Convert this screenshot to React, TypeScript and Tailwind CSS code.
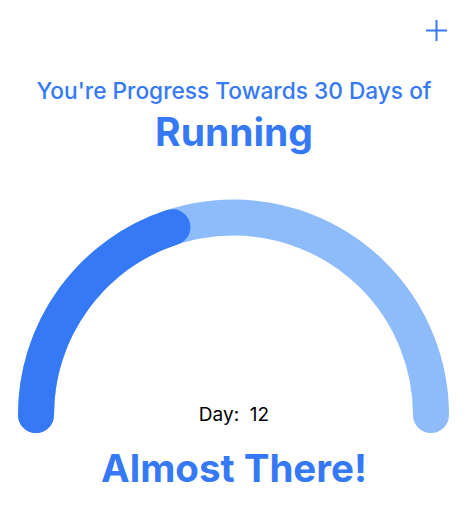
import React from "react";

const DAYS = 30;
const day = 12;

// gauge geometry, in svg coords
const CX = 233.5;
const CY = 219;
const R = 197.5;

function arcPath(fraction: number) {
  const a = Math.PI - Math.PI * fraction;
  const x = CX + R * Math.cos(a);
  const y = CY - R * Math.sin(a);
  return `M ${CX - R} ${CY} A ${R} ${R} 0 0 1 ${x} ${y}`;
}

function Gauge() {
  return (
    <div className="relative h-[240px] w-full">
      <svg width="468" height="240" viewBox="0 0 468 240" className="block">
        <path
          d={arcPath(1)}
          fill="none"
          stroke="#8ebbf9"
          strokeWidth={36}
          strokeLinecap="round"
        />
        <path
          d={arcPath(day / DAYS)}
          fill="none"
          stroke="#3579f6"
          strokeWidth={36}
          strokeLinecap="round"
        />
      </svg>
      <div className="absolute left-0 right-0 top-[207px] text-center text-[19px] leading-[24px] text-black">
        Day:&nbsp; {day}
      </div>
    </div>
  );
}

export default function App() {
  return (
    <div
      className="flex h-[520px] w-[468px] flex-col bg-white"
      style={{ fontFamily: "Inter, 'Noto Sans', sans-serif" }}
    >
      <div className="flex justify-end pr-[21px] pt-[20px]">
        <button className="text-[#3579f6]" aria-label="Add">
          <svg width="21" height="21" viewBox="0 0 21 21" className="block">
            <path d="M10.5 0 V21 M0 10.5 H21" stroke="#3579f6" strokeWidth={2} />
          </svg>
        </button>
      </div>

      <p className="mt-[35.8px] text-center text-[22.7px] font-medium leading-[28px] text-[#3579f6]">
        You're Progress Towards 30 Days of
      </p>
      <h1 className="mt-[3px] text-center text-[39px] font-bold leading-[48px] text-[#3579f6]">
        Running
      </h1>

      <div className="mt-[40px]">
        <Gauge />
      </div>

      <h2 className="mt-[8px] text-center text-[38.5px] font-bold leading-[48px] text-[#3579f6]">
        Almost There!
      </h2>
    </div>
  );
}
